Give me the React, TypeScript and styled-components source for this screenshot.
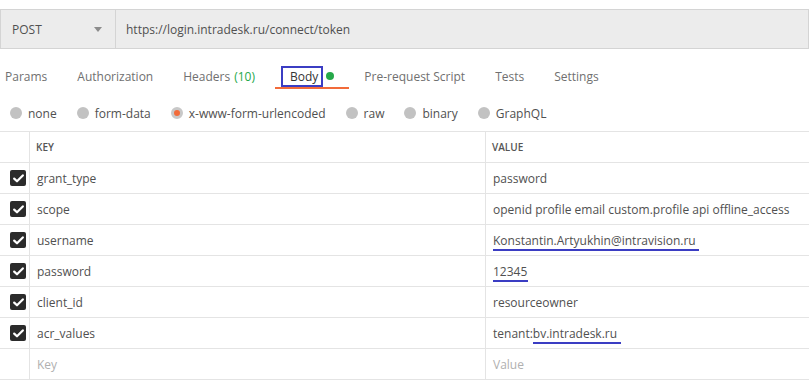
import styled, { createGlobalStyle } from 'styled-components';

const GlobalStyle = createGlobalStyle`
  body {
    margin: 0;
    background: #ffffff;
    font-family: 'Open Sans', 'Noto Sans', sans-serif;
    font-size: 12px;
    color: #505050;
  }
`;

const Page = styled.div`
  width: 809px;
  padding-top: 9px;
  overflow: hidden;
`;

const UrlBar = styled.div`
  display: flex;
  height: 38px;
  background: #ececec;
  border: 1px solid #d4d4d4;
`;

const Method = styled.div`
  box-sizing: border-box;
  width: 115px;
  flex-shrink: 0;
  display: flex;
  align-items: center;
  justify-content: space-between;
  padding: 0 7px 0 11px;
  border-right: 1px solid #d4d4d4;
  color: #505050;
`;

const Caret = styled.span`
  width: 0;
  height: 0;
  border-left: 4px solid transparent;
  border-right: 4px solid transparent;
  border-top: 5px solid #8c8c8c;
  margin-right: 6px;
`;

const UrlText = styled.div`
  display: flex;
  align-items: center;
  padding-left: 10px;
  color: #505050;
`;

const Tabs = styled.div`
  display: flex;
  margin: 16px 0 0 -10px;
  height: 24px;
`;

const Tab = styled.div<{ $active?: boolean }>`
  position: relative;
  display: flex;
  align-items: center;
  padding: 0 15px;
  color: ${(p) => (p.$active ? '#333333' : '#707070')};
  border-bottom: 2px solid ${(p) => (p.$active ? '#f26b3a' : 'transparent')};
  white-space: nowrap;
`;

const Count = styled.span`
  color: #26a84a;
  margin: 0 5px 0 4px;
`;

const Boxed = styled.span`
  position: relative;
  &::before {
    content: '';
    position: absolute;
    left: -9px;
    right: -5px;
    top: -2px;
    bottom: -2px;
    border: 2px solid #3b3dc3;
  }
`;

const Dot = styled.span`
  width: 8px;
  height: 8px;
  border-radius: 50%;
  background: #26a84a;
  margin-left: 8px;
`;

const Radios = styled.div`
  display: flex;
  align-items: center;
  gap: 20px;
  padding: 14px 0 0 10px;
  height: 20px;
`;

const Radio = styled.label`
  display: flex;
  align-items: center;
  gap: 6px;
  color: #505050;
  white-space: nowrap;
`;

const Circle = styled.span<{ $checked?: boolean }>`
  box-sizing: border-box;
  width: 12px;
  height: 12px;
  border-radius: 50%;
  background: ${(p) => (p.$checked ? '#f26b3a' : '#c2c2c2')};
  border: ${(p) => (p.$checked ? '3px solid #c8c8c8' : 'none')};
`;

const Table = styled.div`
  margin-top: 8px;
  border-top: 1px solid #e4e4e4;
`;

const Row = styled.div`
  display: grid;
  grid-template-columns: 30px 456px 1fr;
  height: 30px;
  border-bottom: 1px solid #e4e4e4;
`;

const CheckCell = styled.div`
  display: flex;
  align-items: center;
  padding-left: 10px;
  border-right: 1px solid #e4e4e4;
`;

const Cell = styled.div<{ $head?: boolean; $placeholder?: boolean; $last?: boolean }>`
  display: flex;
  align-items: center;
  padding-left: ${(p) => (p.$head ? '6px' : '7px')};
  border-right: ${(p) => (p.$last ? 'none' : '1px solid #e4e4e4')};
  font-size: ${(p) => (p.$head ? '10px' : '12px')};
  font-weight: ${(p) => (p.$head ? 600 : 400)};
  color: ${(p) => (p.$placeholder ? '#b0b0b0' : p.$head ? '#555555' : '#505050')};
  white-space: nowrap;
`;

const CheckBox = styled.span`
  width: 16px;
  height: 16px;
  border-radius: 2px;
  background: #2b2b2b;
  display: flex;
  align-items: center;
  justify-content: center;
`;

const Marked = styled.span<{ $extra?: number }>`
  position: relative;
  &::after {
    content: '';
    position: absolute;
    left: 0;
    right: ${(p) => -(p.$extra ?? 3)}px;
    bottom: -2px;
    height: 2px;
    background: #3b3dc3;
  }
`;

function Check() {
  return (
    <CheckBox>
      <svg width="11" height="9" viewBox="0 0 11 9">
        <path d="M1.2 4.6 L4 7.3 L9.8 1.4" stroke="#fff" strokeWidth="2.2" fill="none" strokeLinecap="round" strokeLinejoin="round" />
      </svg>
    </CheckBox>
  );
}

type param = {
  key: string;
  value: React.ReactNode;
}[];

export default function App() {
  const params: param = [
    { key: 'grant_type', value: 'password' },
    { key: 'scope', value: 'openid profile email custom.profile api offline_access' },
    { key: 'username', value: <Marked>Konstantin.Artyukhin@intravision.ru</Marked> },
    { key: 'password', value: <Marked $extra={1}>12345</Marked> },
    { key: 'client_id', value: 'resourceowner' },
    {
      key: 'acr_values',
      value: (
        <>
          tenant:<Marked $extra={4}>bv.intradesk.ru</Marked>
        </>
      ),
    },
  ];

  const radios = ['none', 'form-data', 'x-www-form-urlencoded', 'raw', 'binary', 'GraphQL'];

  return (
    <>
      <GlobalStyle />
      <Page>
        <UrlBar>
          <Method>
            POST
            <Caret />
          </Method>
          <UrlText>https://login.intradesk.ru/connect/token</UrlText>
        </UrlBar>

        <Tabs>
          <Tab>Params</Tab>
          <Tab>Authorization</Tab>
          <Tab>
            Headers<Count>(10)</Count>
          </Tab>
          <Tab $active>
            <Boxed>Body</Boxed>
            <Dot />
          </Tab>
          <Tab>Pre-request Script</Tab>
          <Tab>Tests</Tab>
          <Tab>Settings</Tab>
        </Tabs>

        <Radios>
          {radios.map((r) => (
            <Radio key={r}>
              <Circle $checked={r === 'x-www-form-urlencoded'} />
              {r}
            </Radio>
          ))}
        </Radios>

        <Table>
          <Row>
            <CheckCell />
            <Cell $head>KEY</Cell>
            <Cell $head $last>
              VALUE
            </Cell>
          </Row>
          {params.map((p, i) => (
            <Row key={i}>
              <CheckCell>
                <Check />
              </CheckCell>
              <Cell>{p.key}</Cell>
              <Cell $last>{p.value}</Cell>
            </Row>
          ))}
          <Row>
            <CheckCell />
            <Cell $placeholder>Key</Cell>
            <Cell $placeholder $last>
              Value
            </Cell>
          </Row>
        </Table>
      </Page>
    </>
  );
}
